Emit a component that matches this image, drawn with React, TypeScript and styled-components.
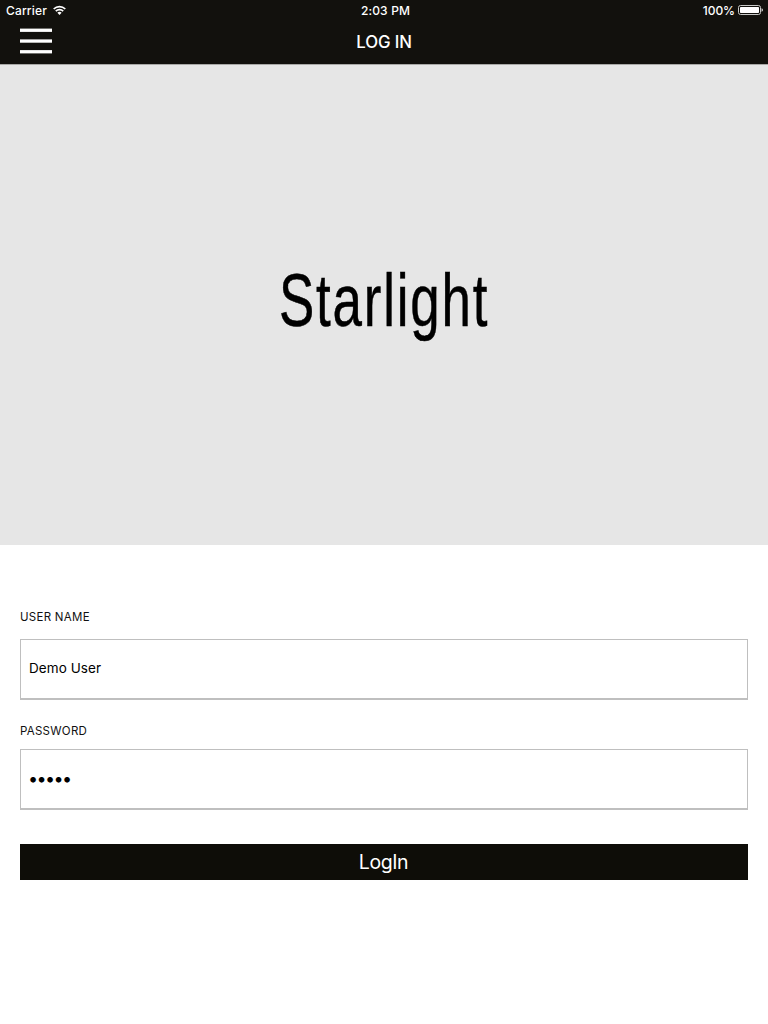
import React from "react";
import styled, { createGlobalStyle } from "styled-components";

const GlobalStyle = createGlobalStyle`
  *, *::before, *::after { box-sizing: border-box; }
  body { margin: 0; background: #fff; font-family: Inter, "Liberation Sans", sans-serif; }
`;

const Screen = styled.div`
  display: flex;
  flex-direction: column;
  width: 768px;
  height: 1024px;
  background: #fff;
  overflow: hidden;
`;

const Header = styled.header`
  height: 65px;
  background: #12110d;
  border-bottom: 1px solid #a8a8a6;
  color: #fff;
`;

const StatusBar = styled.div`
  display: grid;
  grid-template-columns: 1fr auto 1fr;
  align-items: center;
  height: 20px;
  padding: 2px 5px 0 6px;
  font-size: 12px;
  line-height: 18px;
  font-weight: 500;
  letter-spacing: 0.15px;
`;

const StatusGroup = styled.div<{ $end?: boolean; $gap: number }>`
  display: flex;
  align-items: center;
  justify-content: ${(p) => (p.$end ? "flex-end" : "flex-start")};
  gap: ${(p) => p.$gap}px;
  svg { display: block; margin-top: -2px; }
`;

const Clock = styled.span`
  padding-left: 2px;
  letter-spacing: 0.15px;
`;

const Percent = styled.span`
  letter-spacing: -0.05px;
`;

const NavBar = styled.nav`
  display: grid;
  grid-template-columns: 52px 1fr 52px;
  align-items: center;
  height: 44px;
`;

const MenuButton = styled.button`
  padding: 0 0 0 20px;
  border: 0;
  background: none;
  height: 44px;
  svg { display: block; margin-top: -2px; }
`;

const Title = styled.h1`
  margin: 0;
  text-align: center;
  font-size: 16.8px;
  line-height: 44px;
  font-weight: 500;
  letter-spacing: -0.1px;
`;

const Hero = styled.section`
  display: flex;
  align-items: center;
  justify-content: center;
  height: 480px;
  background: #e6e6e6;
`;

const Wordmark = styled.div`
  font-family: "Liberation Sans", sans-serif;
  font-size: 73.5px;
  line-height: 100px;
  letter-spacing: 2.5px;
  color: #000;
  -webkit-text-stroke: 0.5px #000;
  transform: scaleX(0.72);
  padding-bottom: 9px;
`;

const Form = styled.form`
  display: flex;
  flex-direction: column;
  padding: 64px 20px 0;
`;

const Label = styled.label<{ $gap: number }>`
  font-size: 11.5px;
  line-height: 16px;
  letter-spacing: 0.27px;
  color: #111;
  margin-bottom: ${(p) => p.$gap}px;
`;

const Field = styled.input<{ $after: number }>`
  height: 61px;
  margin: 0 0 ${(p) => p.$after}px;
  padding: 0 8px 3px;
  border: 1px solid #bfbfbf;
  border-bottom-width: 2px;
  border-radius: 0;
  outline: 0;
  background: #fff;
  color: #000;
  font-family: inherit;
  font-size: 13.5px;
  letter-spacing: 0.08px;

  &[type="password"] {
    padding-left: 7px;
    padding-bottom: 2px;
    font-size: 18px;
    letter-spacing: -1.6px;
  }
`;

const Submit = styled.button`
  height: 36px;
  padding: 0 1px 0 0;
  border: 0;
  background: #0e0d08;
  color: #fff;
  font-family: inherit;
  font-size: 19.5px;
  letter-spacing: -0.4px;
  line-height: 36px;
  font-weight: 400;
`;

const WifiIcon = () => (
  <svg width="13" height="10" viewBox="0 0 13 10" fill="none" stroke="#fff" strokeWidth="1.7">
    <path d="M0.7 4a8.3 8.3 0 0 1 11.6 0" />
    <path d="M2.8 6.2a5.3 5.3 0 0 1 7.4 0" />
    <path d="M6.5 10 4.4 7.8a3 3 0 0 1 4.2 0Z" fill="#fff" stroke="none" />
  </svg>
);

const BatteryIcon = () => (
  <svg width="25" height="10" viewBox="0 0 25 10">
    <rect x="0.5" y="0.5" width="22" height="9" rx="2" fill="none" stroke="#c9c9c7" />
    <rect x="2" y="2" width="19" height="6" rx="0.8" fill="#fff" />
    <path d="M23.6 3.2c1.6.5 1.6 3.1 0 3.6Z" fill="#fff" />
  </svg>
);

const MenuIcon = () => (
  <svg width="32" height="26" viewBox="0 0 32 26" fill="#fff">
    <rect y="0.6" width="32" height="3.3" />
    <rect y="11.4" width="32" height="3.3" />
    <rect y="22.1" width="32" height="3.3" />
  </svg>
);

export default function App() {
  return (
    <Screen>
      <GlobalStyle />
      <Header>
        <StatusBar>
          <StatusGroup $gap={6}>
            <span>Carrier</span>
            <WifiIcon />
          </StatusGroup>
          <Clock>2:03 PM</Clock>
          <StatusGroup $end $gap={3}>
            <Percent>100%</Percent>
            <BatteryIcon />
          </StatusGroup>
        </StatusBar>
        <NavBar>
          <MenuButton type="button" aria-label="Menu">
            <MenuIcon />
          </MenuButton>
          <Title>LOG IN</Title>
        </NavBar>
      </Header>
      <Hero>
        <Wordmark>Starlight</Wordmark>
      </Hero>
      <Form onSubmit={(e) => e.preventDefault()}>
        <Label htmlFor="user" $gap={14}>USER NAME</Label>
        <Field id="user" type="text" defaultValue="Demo User" $after={23} />
        <Label htmlFor="password" $gap={10}>PASSWORD</Label>
        <Field id="password" type="password" defaultValue="12345" $after={34} />
        <Submit type="submit">LogIn</Submit>
      </Form>
    </Screen>
  );
}
